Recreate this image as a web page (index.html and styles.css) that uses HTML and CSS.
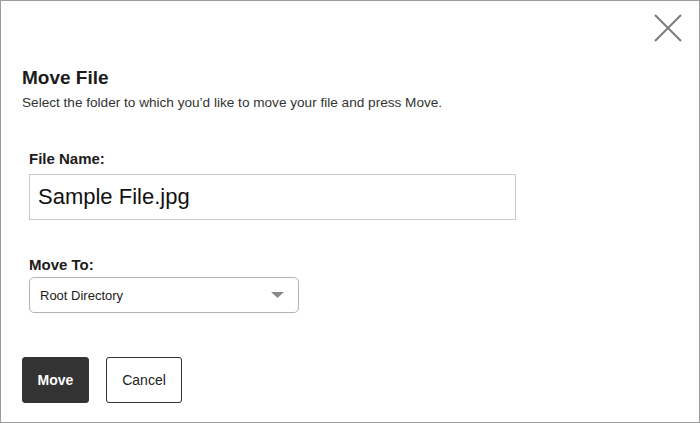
FILE: index.html
```html
<!DOCTYPE html>
<html lang="en">
<head>
<meta charset="utf-8">
<title>Move File</title>
<link rel="stylesheet" href="styles.css">
</head>
<body>
<div class="dialog">
  <div class="header">
    <button class="close" aria-label="Close">
      <svg width="28" height="28" viewBox="0 0 28 28"><path d="M1 1 L27 27 M27 1 L1 27" stroke="#7c7c7c" stroke-width="2" fill="none"/></svg>
    </button>
  </div>
  <h1 class="title">Move File</h1>
  <p class="subtitle">Select the folder to which you’d like to move your file and press Move.</p>
  <div class="field field-name">
    <label class="label" for="fname">File Name:</label>
    <input class="text-input" id="fname" type="text" value="Sample File.jpg">
  </div>
  <div class="field field-dest">
    <div class="label">Move To:</div>
    <button class="dropdown">
      <span class="dropdown-text">Root Directory</span>
      <svg class="caret" width="13" height="6" viewBox="0 0 13 6"><path d="M0 0 H13 L6.5 6 Z" fill="#8a8a8a"/></svg>
    </button>
  </div>
  <div class="actions">
    <button class="btn btn-primary">Move</button>
    <button class="btn btn-secondary">Cancel</button>
  </div>
</div>
</body>
</html>
```
FILE: styles.css
```css
html, body {
  margin: 0;
  padding: 0;
  background: #ffffff;
}
body {
  font-family: "Liberation Sans", Arial, sans-serif;
  color: #222;
}
.dialog {
  width: 700px;
  height: 423px;
  box-sizing: border-box;
  border: 1px solid #9c9c9c;
  padding: 0 17px 0 21px;
  display: flex;
  flex-direction: column;
}
.header {
  display: flex;
  justify-content: flex-end;
  padding-top: 13px;
}
.close {
  width: 28px;
  height: 28px;
  padding: 0;
  margin: 0;
  border: none;
  background: none;
  display: block;
  cursor: pointer;
}
.close svg {
  display: block;
}
.title {
  margin: 25px 0 0;
  font-size: 19px;
  line-height: 22px;
  font-weight: bold;
  color: #1b1b1b;
}
.subtitle {
  margin: 6px 0 0;
  font-size: 13.6px;
  line-height: 16px;
  color: #333;
}
.field {
  margin-left: 7px;
  display: flex;
  flex-direction: column;
  align-items: flex-start;
}
.field-name {
  margin-top: 39px;
}
.field-dest {
  margin-top: 36px;
}
.label {
  display: block;
  font-size: 15px;
  line-height: 18px;
  font-weight: bold;
  color: #1b1b1b;
}
.text-input {
  margin-top: 6px;
  width: 487px;
  height: 46px;
  box-sizing: border-box;
  border: 1px solid #cbcbcb;
  padding: 0 8px;
  font-family: "Liberation Sans", Arial, sans-serif;
  font-size: 22px;
  color: #111;
  background: #fff;
  outline: none;
}
.dropdown {
  margin-top: 3px;
  width: 270px;
  height: 36px;
  box-sizing: border-box;
  border: 1px solid #b4b4b4;
  border-radius: 5px;
  background: #fff;
  padding: 0 14px 0 10px;
  display: flex;
  align-items: center;
  justify-content: space-between;
  font-family: "Liberation Sans", Arial, sans-serif;
  font-size: 13px;
  color: #1b1b1b;
  cursor: pointer;
}
.caret {
  display: block;
}
.actions {
  margin-top: 44px;
  display: flex;
  gap: 17px;
}
.btn {
  height: 46px;
  box-sizing: border-box;
  border-radius: 3px;
  font-family: "Liberation Sans", Arial, sans-serif;
  font-size: 14px;
  padding: 0;
  cursor: pointer;
}
.btn-primary {
  width: 67px;
  background: #333333;
  color: #ffffff;
  font-weight: bold;
  border: 1px solid #333333;
}
.btn-secondary {
  width: 76px;
  background: #ffffff;
  color: #222;
  border: 1px solid #333333;
}
```
